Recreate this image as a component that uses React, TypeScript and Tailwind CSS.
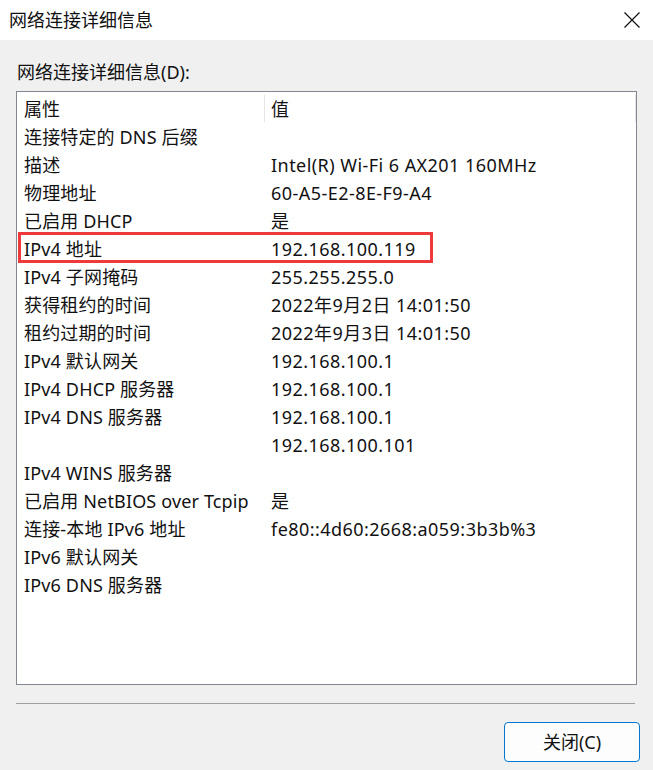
const rows: [string, string][] = [
  ['连接特定的 DNS 后缀', ''],
  ['描述', 'Intel(R) Wi-Fi 6 AX201 160MHz'],
  ['物理地址', '60-A5-E2-8E-F9-A4'],
  ['已启用 DHCP', '是'],
  ['IPv4 地址', '192.168.100.119'],
  ['IPv4 子网掩码', '255.255.255.0'],
  ['获得租约的时间', '2022年9月2日 14:01:50'],
  ['租约过期的时间', '2022年9月3日 14:01:50'],
  ['IPv4 默认网关', '192.168.100.1'],
  ['IPv4 DHCP 服务器', '192.168.100.1'],
  ['IPv4 DNS 服务器', '192.168.100.1'],
  ['', '192.168.100.101'],
  ['IPv4 WINS 服务器', ''],
  ['已启用 NetBIOS over Tcpip', '是'],
  ['连接-本地 IPv6 地址', 'fe80::4d60:2668:a059:3b3b%3'],
  ['IPv6 默认网关', ''],
  ['IPv6 DNS 服务器', ''],
];

function CloseIcon() {
  return (
    <svg width="16" height="16" viewBox="0 0 16 16" fill="none">
      <path d="M0.5 0.5 L15.5 15.5 M15.5 0.5 L0.5 15.5" stroke="#111" strokeWidth="1.2" />
    </svg>
  );
}

export default function App() {
  return (
    <div
      className="w-[653px] h-[770px] bg-[#f0f0f0] flex flex-col text-[18px] text-[#111] overflow-hidden"
      style={{ fontFamily: '"Noto Sans", "Noto Sans CJK SC", sans-serif' }}
    >
      {/* Title bar */}
      <div className="h-[40px] bg-white flex items-center justify-between pl-[9px] pr-[13px]">
        <span className="leading-[28px]">网络连接详细信息</span>
        <CloseIcon />
      </div>

      <div className="flex flex-col px-[16px] pt-[18px]">
        <div className="leading-[28px] pl-[1px] mb-[5px]">网络连接详细信息(D):</div>

        {/* List box */}
        <div className="relative h-[594px] border border-[#828790] bg-white">
          <div className="flex h-[31px] pt-[3px] leading-[28px]">
            <div className="w-[248px] pl-[7px] border-r border-[#e5e5e5] mb-[1px]">属性</div>
            <div className="w-[371px] pl-[6px] border-r border-[#e5e5e5] mb-[1px]">值</div>
          </div>
          {rows.map(([k, v], i) => (
            <div key={i} className="flex h-[28px] leading-[28px] whitespace-nowrap">
              <div className="w-[248px] pl-[7px] tracking-[0.15px]">{k}</div>
              <div className="pl-[6px] tracking-[0.45px]">{v}</div>
            </div>
          ))}

          {/* annotation */}
          <div className="absolute left-[1px] top-[140px] w-[415px] h-[31px] border-[3px] border-[#ee3a3a]" />
        </div>

        <div className="mt-[18px] h-px bg-[#a0a0a0] mr-[2px]" />

        <div className="flex justify-end mt-[18px] -mr-[3px]">
          <button className="w-[136px] h-[40px] rounded-[4px] border border-[#0078d4] bg-[#fdfdfd] leading-[28px]">
            关闭(C)
          </button>
        </div>
      </div>
    </div>
  );
}
